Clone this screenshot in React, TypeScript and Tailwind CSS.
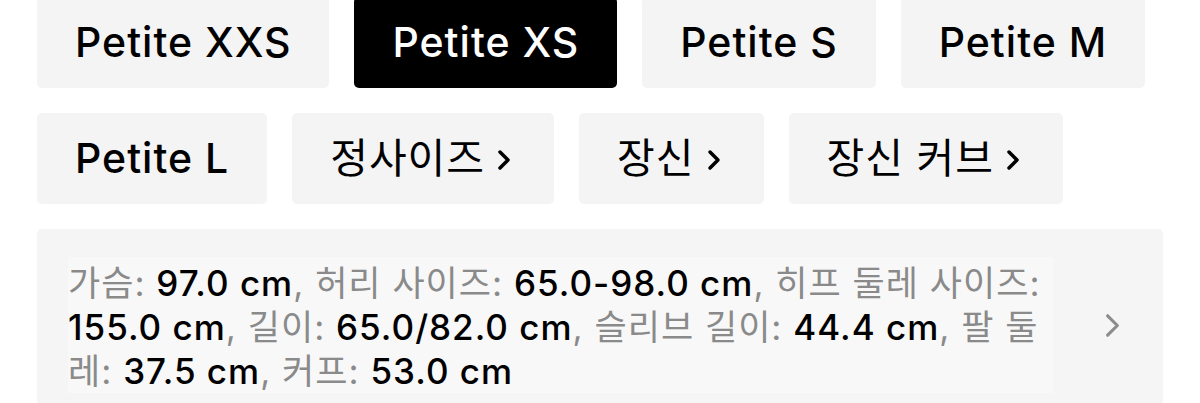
import React from "react";

interface SizeOption {
    label: string;
    more?: boolean;
}

interface Measure {
    name: string;
    value: string;
}

const rowOne: SizeOption[] = [
    { label: "Petite XXS" },
    { label: "Petite XS" },
    { label: "Petite S" },
    { label: "Petite M" },
];

const rowTwo: SizeOption[] = [
    { label: "Petite L" },
    { label: "정사이즈", more: true },
    { label: "장신", more: true },
    { label: "장신 커브", more: true },
];

const measures: Measure[] = [
    { name: "가슴", value: "97.0 cm" },
    { name: "허리 사이즈", value: "65.0-98.0 cm" },
    { name: "히프 둘레 사이즈", value: "155.0 cm" },
    { name: "길이", value: "65.0/82.0 cm" },
    { name: "슬리브 길이", value: "44.4 cm" },
    { name: "팔 둘레", value: "37.5 cm" },
    { name: "커프", value: "53.0 cm" },
];

const Chevron: React.FC<{ className?: string; strokeWidth?: number }> = ({ className, strokeWidth = 3.5 }) => (
    <svg viewBox="0 0 14 22" fill="none" className={className}>
        <path d="M3 3l8 8-8 8" stroke="currentColor" strokeWidth={strokeWidth} strokeLinecap="round" strokeLinejoin="round" />
    </svg>
);

const SizeButton: React.FC<{ option: SizeOption; selected: boolean }> = ({ option, selected }) => (
    <button
        type="button"
        className={
            "h-[91px] px-[38px] rounded-[5px] flex items-center gap-3 text-[41px] tracking-[1px] font-medium whitespace-nowrap " +
            (selected ? "bg-black text-white" : "bg-[#f4f4f4] text-black")
        }
    >
        <span className={option.more ? "font-normal" : ""}>{option.label}</span>
        {option.more && (
            <span className="w-[19px] flex">
                <Chevron className="w-[14px] h-[22px] mt-[2px]" />
            </span>
        )}
    </button>
);

const App: React.FC = () => {
    const selected = "Petite XS";

    return (
        <div
            className="w-[1200px] h-[403px] overflow-hidden bg-white px-[37px]"
            style={{ fontFamily: "Inter, 'Noto Sans CJK KR', sans-serif" }}
        >
            <div className="flex flex-col gap-[25px] -mt-[3px]">
                <div className="flex gap-[25px]">
                    {rowOne.map(o => <SizeButton key={o.label} option={o} selected={o.label === selected} />)}
                </div>
                <div className="flex gap-[25px]">
                    {rowTwo.map(o => <SizeButton key={o.label} option={o} selected={o.label === selected} />)}
                </div>
            </div>

            {/* measurements of the selected size */}
            <div className="mt-[25px] w-[1126px] bg-[#f5f5f5] rounded-[5px] flex items-center pl-[31px] pr-[42px] py-[28px]">
                <p className="w-[985px] bg-[#f8f8f8] pt-1 text-[35px] tracking-[1px] leading-[44px] text-[#8a8a8a]">
                    {measures.map((m, i) => (
                        <React.Fragment key={m.name}>
                            {m.name}: <span className="text-black font-medium">{m.value}</span>
                            {i < measures.length - 1 ? ", " : ""}
                        </React.Fragment>
                    ))}
                </p>
                <Chevron className="ml-auto w-[17px] h-[27px] text-[#8c8c8c]" strokeWidth={2.6} />
            </div>
        </div>
    );
};

export default App;
